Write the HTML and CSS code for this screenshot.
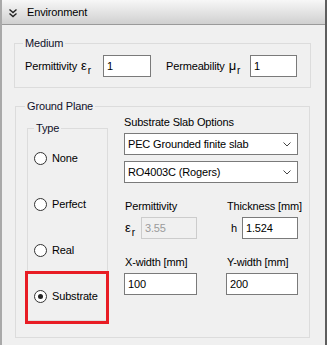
FILE: index.html
```html
<!DOCTYPE html>
<html>
<head>
<meta charset="utf-8">
<link rel="stylesheet" href="styles.css">
</head>
<body>
<div class="panel">
  <div class="header">
    <svg class="chev" width="10" height="10" viewBox="0 0 10 10"><polyline points="1.5,1.5 5,4.5 8.5,1.5" fill="none" stroke="#222" stroke-width="1.4"/><polyline points="1.5,5.5 5,8.5 8.5,5.5" fill="none" stroke="#222" stroke-width="1.4"/></svg>
    <span class="title">Environment</span>
  </div>
  <div class="content">
    <fieldset class="group medium">
      <legend>Medium</legend>
      <div class="mrow">
        <div class="mgroup g1">
          <span class="lbl">Permittivity</span>
          <span class="sym">ε<sub>r</sub></span>
          <span class="input w48">1</span>
        </div>
        <div class="mgroup g2">
          <span class="lbl">Permeability</span>
          <span class="sym">μ<sub>r</sub></span>
          <span class="input w47">1</span>
        </div>
      </div>
    </fieldset>
    <fieldset class="group ground">
      <legend>Ground Plane</legend>
      <div class="gp">
        <fieldset class="group type">
          <legend>Type</legend>
          <div class="radio"><span class="circle"></span><span>None</span></div>
          <div class="radio"><span class="circle"></span><span>Perfect</span></div>
          <div class="radio"><span class="circle"></span><span>Real</span></div>
          <div class="radio marked"><span class="circle checked"></span><span>Substrate</span></div>
        </fieldset>
        <div class="slab">
          <div class="slabtitle">Substrate Slab Options</div>
          <div class="select first"><span>PEC Grounded finite slab</span><svg width="8" height="5" viewBox="0 0 8 5"><polyline points="0.5,0.5 4,4 7.5,0.5" fill="none" stroke="#444" stroke-width="1"/></svg></div>
          <div class="select"><span>RO4003C (Rogers)</span><svg width="8" height="5" viewBox="0 0 8 5"><polyline points="0.5,0.5 4,4 7.5,0.5" fill="none" stroke="#444" stroke-width="1"/></svg></div>
          <div class="grid">
            <div class="cell">
              <div class="clbl">Permittivity</div>
              <div class="crow"><span class="csym">ε<sub>r</sub></span><span class="input disabled grow">3.55</span></div>
            </div>
            <div class="cell">
              <div class="clbl">Thickness [mm]</div>
              <div class="crow"><span class="csym h">h</span><span class="input grow">1.524</span></div>
            </div>
            <div class="cell">
              <div class="clbl">X-width [mm]</div>
              <div class="crow"><span class="input grow">100</span></div>
            </div>
            <div class="cell">
              <div class="clbl">Y-width [mm]</div>
              <div class="crow"><span class="input grow">200</span></div>
            </div>
          </div>
        </div>
      </div>
    </fieldset>
  </div>
</div>
</body>
</html>
```
FILE: styles.css
```css
* { box-sizing: border-box; }
html, body { margin: 0; padding: 0; }
body {
  background: #f0f0f0;
  font-family: "Liberation Sans", Arial, sans-serif;
  font-size: 11px;
  letter-spacing: -0.15px;
  color: #000;
  line-height: 14px;
}
.panel {
  width: 327px;
  height: 345px;
  border-left: 2px solid #a9a9a9;
  border-right: 2px solid #5e5e5e;
  background: #f0f0f0;
  overflow: hidden;
}
.header {
  height: 25px;
  background: linear-gradient(#f7f7f7, #d0d0d0);
  border-bottom: 1px solid #9a9a9a;
  display: flex;
  align-items: center;
  padding-left: 6px;
}
.chev { margin-top: 1px; }
.title { margin-left: 9px; font-size: 11px; }
.content {
  padding: 11px 14px 0 12px;
}
.group {
  margin: 0;
  border: 1px solid #dcdcdc;
  min-width: 0;
}
.group legend {
  padding: 0 2px;
  margin-left: -2px;
  line-height: 14px;
  color: #10102a;
}
.medium {
  padding: 0 12px 10px 10px;
}
.mrow {
  margin-top: 5px;
  display: flex;
  align-items: center;
  height: 22px;
  gap: 15px;
}
.mgroup {
  display: flex;
  align-items: center;
  white-space: nowrap;
}
.g1 { width: 126px; }
.g2 { width: 131px; }
.mgroup .input { margin-left: auto; }
.sym { font-size: 13px; margin-left: 4px; }
.sym sub { font-size: 10px; vertical-align: -4px; line-height: 0; margin-left: 1px; }
.input {
  height: 22px;
  border: 1px solid #7a7a7a;
  background: #fff;
  padding: 3px 3px 0 3px;
  display: block;
}
.w48 { width: 48px; }
.w47 { width: 47px; }
.ground {
  margin: 11px 1px 0 1px;
  padding: 0 10px 16px 11px;
}
.gp {
  display: flex;
  margin-top: 8px;
  gap: 16px;
}
.type {
  width: 81px;
  flex: none;
  padding: 0 0 1px 0;
}
.type legend { margin-left: 6px; }
.radio {
  height: 46px;
  display: flex;
  align-items: center;
  padding-left: 6px;
  gap: 5px;
  position: relative;
}
.circle {
  width: 13px;
  height: 13px;
  border: 1px solid #333;
  border-radius: 50%;
  background: #fff;
  position: relative;
}
.circle.checked::after {
  content: "";
  position: absolute;
  left: 3px;
  top: 3px;
  width: 5px;
  height: 5px;
  border-radius: 50%;
  background: #222;
}
.marked::after {
  content: "";
  position: absolute;
  left: -3px;
  right: -2px;
  top: -2px;
  bottom: -5px;
  border: 3px solid #e81c24;
}
.slab {
  width: 174px;
  margin-top: -6px;
}
.slabtitle { height: 14px; }
.select {
  margin-top: 4px;
  height: 22px;
  border: 1px solid #7a7a7a;
  background: #fff;
  display: flex;
  align-items: center;
  justify-content: space-between;
  padding: 0 6px 0 3px;
}
.select + .select { margin-top: 6px; }
.grid {
  margin-top: 16px;
  display: grid;
  grid-template-columns: 73px 72px;
  column-gap: 29px;
  row-gap: 16px;
}
.clbl { height: 14px; padding-left: 1px; white-space: nowrap; }
.crow {
  margin-top: 4px;
  display: flex;
  align-items: center;
}
.csym { font-size: 13px; width: 17px; padding-left: 1px; }
.csym sub { font-size: 10px; vertical-align: -4px; line-height: 0; margin-left: 1px; }
.csym.h { font-size: 11px; width: 16px; padding-left: 5px; }
.grow { flex: 1; min-width: 0; }
.input.disabled {
  background: #f0f0f0;
  border-color: #cccccc;
  color: #9a9a9a;
}
```
